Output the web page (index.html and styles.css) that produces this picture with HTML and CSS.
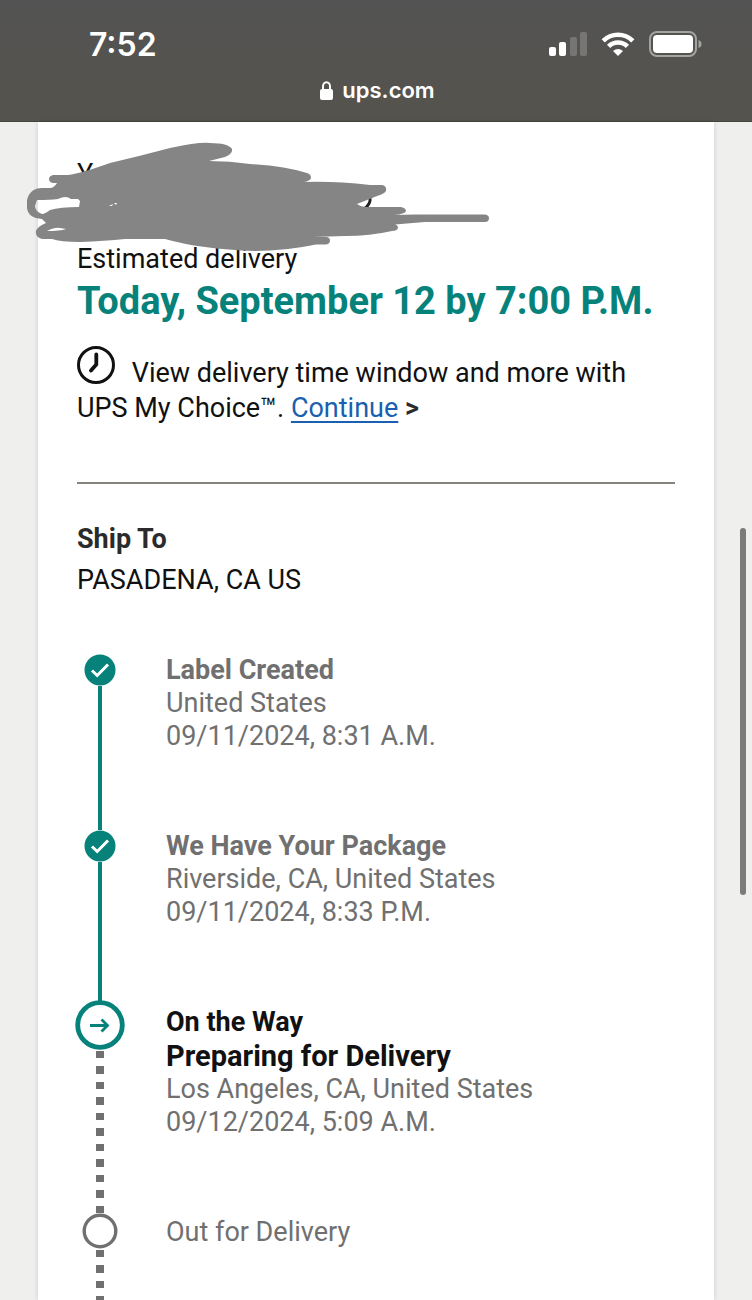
FILE: index.html
```html
<!DOCTYPE html>
<html lang="en">
<head>
    <meta charset="UTF-8">
    <meta name="viewport" content="width=device-width, initial-scale=1.0">
    <title>Tracking | UPS</title>
    <link rel="stylesheet" href="styles.css">
</head>
<body>
    <header class="browser-bar">
        <div class="status-row">
            <time class="clock">7:52</time>
            <div class="status-icons">
                <svg width="38" height="24" viewBox="0 0 38 24" fill="#fff" aria-hidden="true">
                    <rect x="0" y="15" width="7" height="9" rx="2"/>
                    <rect x="10" y="10" width="7" height="14" rx="2"/>
                    <rect x="21" y="5" width="7" height="19" rx="2" opacity=".2"/>
                    <rect x="31" y="0" width="7" height="24" rx="2" opacity=".2"/>
                </svg>
                <svg width="34" height="24" viewBox="0 0 34 24" fill="none" stroke="#fff" stroke-width="4.6" aria-hidden="true">
                    <path d="M2.2 8.8a21 21 0 0 1 29.6 0"/>
                    <path d="M7.6 14.4a13.3 13.3 0 0 1 18.8 0"/>
                    <path d="M17 24l-5-5q5-4.2 10 0z" fill="#fff" stroke="none"/>
                </svg>
                <svg width="53" height="26" viewBox="0 0 53 26" aria-hidden="true">
                    <rect x="1" y="1" width="46" height="24" rx="7" fill="none" stroke="#a3a39f" stroke-width="2"/>
                    <rect x="4" y="4" width="40" height="18" rx="4" fill="#fff"/>
                    <path d="M49.5 9q3 1 3 4t-3 4z" fill="#a3a39f"/>
                </svg>
            </div>
        </div>
        <div class="address">
            <svg width="13" height="19" viewBox="0 0 13 19" aria-hidden="true">
                <path d="M3 9V5.5a3.5 4.3 0 0 1 7 0V9" fill="none" stroke="#fff" stroke-width="2"/>
                <rect x="0" y="8" width="13" height="11" rx="2" fill="#fff"/>
            </svg>
            <span>ups.com</span>
        </div>
    </header>

    <main class="card">
        <section class="summary">
            <p class="shipment">Y</p>
            <p class="label">Estimated delivery</p>
            <h1>Today, September 12 by 7:00 P.M.</h1>
            <p class="promo">
                <svg class="promo-icon" width="38" height="38" viewBox="0 0 38 38" fill="none" stroke="#111" aria-hidden="true">
                    <circle cx="19" cy="19" r="17.5" stroke-width="3"/>
                    <path d="M19.3 8.5V18.5L14 24.5" stroke-width="3.8" stroke-linecap="round" stroke-linejoin="round"/>
                </svg>
                View delivery time window and more with UPS My Choice™. <a href="#">Continue</a> <b>&gt;</b>
            </p>

            <!-- marker scribble over the tracking number -->
            <svg class="scribble" width="480" height="130" viewBox="0 0 480 130" aria-hidden="true">
                <path d="M350 68Q351 74 344 79" fill="none" stroke="#222" stroke-width="3"/>
                <path fill="#858585" fill-rule="evenodd" d="M33 45H48Q62 43 90 33Q120 26 150 18Q178 12 190 13Q208 13 212 19Q213 24 205 27L189 31Q210 31 230 34Q265 36 287 43Q291 44 291 48Q290 51 284 52Q315 51 350 55H362Q367 56 366 61Q364 64 357 66L337 74Q341 77 347 77H381Q386 78 386 81Q385 84 374 85L395 84.5H465Q469 85 469 88Q469 92 465 92H405L375 94.5Q378 95 378 98Q377 101 372 101Q350 106 325 106L293 107H306Q310 107 310 110.5Q310 114 306 114.5H296Q265 121 235 121Q180 119 145 109H105Q85 111 60 112Q40 112 32 109L22 109Q15 107 16 101Q18 96 26 93L22 89Q8 88 7 78V70Q10 58 22 58H30Q34 58 37 53H33Q29 52 29 49Q29 46 33 45ZM17 70Q30 70 38 69Q46 65 51 69H58L60 71L59 77Q40 77 30 80Q25 84 22 84Q15 81 15 76ZM27 101Q35 97 40 98L46 99Q40 101 27 101ZM89 76L93 74L92 76ZM94 73L97 73L96 75Z"/>
            </svg>
        </section>

        <section class="ship-to">
            <h2>Ship To</h2>
            <p>PASADENA, CA US</p>
        </section>

        <ol class="timeline">
            <li class="step done">
                <div class="rail">
                    <svg width="32" height="32" viewBox="0 0 32 32" aria-hidden="true">
                        <circle cx="16" cy="16" r="15.5" fill="#06827a"/>
                        <path d="M8 16.5L13.2 21.5L24 10.5" fill="none" stroke="#fff" stroke-width="3"/>
                    </svg>
                </div>
                <div class="details">
                    <h3>Label Created</h3>
                    <p>United States</p>
                    <p>09/11/2024, 8:31 A.M.</p>
                </div>
            </li>
            <li class="step done">
                <div class="rail">
                    <svg width="32" height="32" viewBox="0 0 32 32" aria-hidden="true">
                        <circle cx="16" cy="16" r="15.5" fill="#06827a"/>
                        <path d="M8 16.5L13.2 21.5L24 10.5" fill="none" stroke="#fff" stroke-width="3"/>
                    </svg>
                </div>
                <div class="details">
                    <h3>We Have Your Package</h3>
                    <p>Riverside, CA, United States</p>
                    <p>09/11/2024, 8:33 P.M.</p>
                </div>
            </li>
            <li class="step current">
                <div class="rail">
                    <svg width="50" height="50" viewBox="0 0 50 50" fill="none" stroke="#06827a" aria-hidden="true">
                        <circle cx="25" cy="25" r="22.3" fill="#fff" stroke-width="4.8"/>
                        <path d="M15 25.5H32M26.5 19.5L32.5 25.5L26.5 31.5" stroke-width="2.8"/>
                    </svg>
                </div>
                <div class="details">
                    <h3>On the Way</h3>
                    <h3 class="substatus">Preparing for Delivery</h3>
                    <p>Los Angeles, CA, United States</p>
                    <p>09/12/2024, 5:09 A.M.</p>
                </div>
            </li>
            <li class="step upcoming">
                <div class="rail">
                    <svg width="36" height="36" viewBox="0 0 36 36" aria-hidden="true">
                        <circle cx="18" cy="18" r="15.8" fill="#fff" stroke="#707070" stroke-width="3.4"/>
                    </svg>
                </div>
                <div class="details">
                    <p>Out for Delivery</p>
                </div>
            </li>
        </ol>
    </main>

    <div class="scroll-thumb"></div>
</body>
</html>
```
FILE: styles.css
```css
* {
    box-sizing: border-box;
}

body {
    margin: 0;
    min-height: 100vh;
    display: flex;
    flex-direction: column;
    background-color: #efefed;
    font-family: Roboto, "Liberation Sans", sans-serif;
    font-size: 27px;
    line-height: 33px;
    color: #111;
}

h1, h2, h3, p, ol {
    margin: 0;
    padding: 0;
}

/* phone status + address bar */
.browser-bar {
    height: 122px;
    padding: 26px 50px 0 89px;
    background: linear-gradient(#535353, #55534d);
    border-bottom: 1px solid #45443f;
    color: #fff;
    font-family: Inter, sans-serif;
}

.status-row {
    display: flex;
    justify-content: space-between;
    align-items: center;
    height: 36px;
}

.clock {
    font-size: 32px;
    font-weight: 600;
}

.status-icons {
    display: flex;
    align-items: center;
    gap: 14px;
}

.address {
    display: flex;
    justify-content: center;
    align-items: center;
    gap: 9px;
    margin: 12px 0 0 -36px;
    font-size: 22px;
    font-weight: 600;
    line-height: 32px;
}

.card {
    flex: 1;
    display: flex;
    flex-direction: column;
    margin: 0 38px;
    padding: 36px 39px 0;
    background-color: #fff;
    box-shadow: 0 0 5px rgba(0, 0, 0, 0.15);
}

/* delivery summary */
.summary {
    position: relative;
    padding-bottom: 56px;
    border-bottom: 2px solid #85837b;
}

.shipment {
    height: 85px;
}

h1 {
    margin-top: 3px;
    font-size: 38px;
    line-height: 44px;
    color: #06827a;
}

.promo {
    margin-top: 23px;
    line-height: 35px;
}

.promo-icon {
    margin-right: 10px;
    vertical-align: -2px;
}

.promo a {
    color: #1a5fb0;
    text-underline-offset: 4px;
}

.promo b {
    color: #2b2b2b;
}

.scribble {
    position: absolute;
    top: -28px;
    left: -57px;
}

.ship-to {
    padding: 39px 0 57px;
}

.ship-to h2 {
    margin-bottom: 8px;
    font-size: 27px;
    color: #2b2b2b;
}

/* tracking timeline */
.timeline {
    flex: 1;
    display: flex;
    flex-direction: column;
    list-style: none;
}

.step {
    display: grid;
    grid-template-columns: 46px 1fr;
    column-gap: 43px;
    color: #707070;
}

.rail {
    display: flex;
    flex-direction: column;
    align-items: center;
}

.rail svg {
    flex-shrink: 0;
}

.rail::after {
    content: "";
    flex: 1;
    width: 4px;
    background-color: #06827a;
}

.details {
    padding-bottom: 77px;
}

.step h3 {
    font-size: 27px;
}

.current {
    margin-top: -6px;
}

.current h3 {
    color: #111;
    line-height: 34px;
}

.current .substatus {
    font-size: 29px;
}

.current .details {
    padding-top: 5px;
    padding-bottom: 74px;
}

.upcoming {
    flex: 1;
}

.upcoming .details {
    padding: 3px 0 0;
}

/* dotted rail for steps that are still ahead */
.current .rail::after,
.upcoming .rail::after {
    width: 8px;
    background: repeating-linear-gradient(#fff 0 1px, #707070 1px 8px, #fff 8px 16px, #707070 16px 24px, #fff 24px 31px);
}

.scroll-thumb {
    position: fixed;
    top: 528px;
    right: 6px;
    width: 6px;
    height: 367px;
    border-radius: 3px;
    background-color: #7b7b7b;
}
```
